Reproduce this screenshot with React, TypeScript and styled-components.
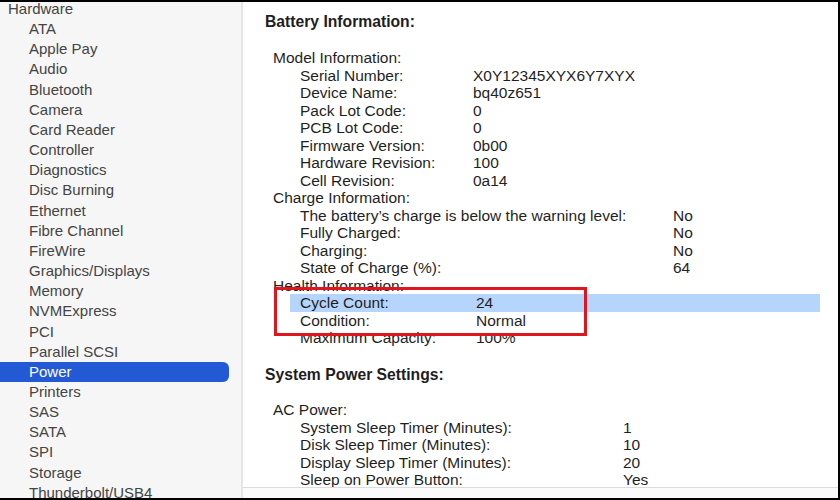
import React from "react";
import styled, { createGlobalStyle } from "styled-components";

const Global = createGlobalStyle`
  html, body { margin: 0; padding: 0; background: #fff; }
  body { font-family: "Liberation Sans", Arial, sans-serif; -webkit-font-smoothing: antialiased; }
  * { box-sizing: border-box; }
`;

const Window = styled.div`
  width: 840px;
  height: 500px;
  border-top: 2px solid #000;
  border-bottom: 2px solid #000;
  display: flex;
  overflow: hidden;
  background: #fff;
`;

const Sidebar = styled.div`
  width: 243px;
  flex-shrink: 0;
  background: #f6f6f6;
  border-right: 2px solid #e6e6e6;
  overflow: hidden;
  padding-right: 12px;
`;

const SideList = styled.div`
  margin-top: -3px;
  display: flex;
  flex-direction: column;
`;

const SideRow = styled.div<{ $level: number; $selected?: boolean }>`
  height: 20.17px;
  line-height: 20.17px;
  font-size: 15px;
  color: ${(p) => (p.$selected ? "#fff" : "#444")};
  background: ${(p) => (p.$selected ? "#2459d6" : "transparent")};
  border-radius: ${(p) => (p.$selected ? "0 6px 6px 0" : "0")};
  padding-left: ${(p) => (p.$level === 0 ? 8 : 29)}px;
  white-space: nowrap;
`;

const Main = styled.div`
  flex: 1;
  display: flex;
  flex-direction: column;
  position: relative;
  border-right: 2px solid #000;
`;

const Scroll = styled.div`
  flex: 1;
  overflow: hidden;
  padding-left: 22px;
  padding-top: 11px;
  color: #1f1f1f;
  font-size: 15.5px;
`;

const BottomStrip = styled.div`
  height: 11px;
  border-top: 1px solid #dcdcdc;
  background: #fbfbfb;
`;

const Heading = styled.div<{ $gap: number }>`
  font-weight: bold;
  font-size: 15.7px;
  line-height: 17.5px;
  color: #1e1e1e;
  margin-bottom: ${(p) => p.$gap}px;
`;

const Section = styled.div<{ $gap?: number }>`
  margin-bottom: ${(p) => p.$gap ?? 0}px;
`;

const GroupTitle = styled.div`
  padding-left: 8px;
  line-height: 17.5px;
  height: 17.5px;
  white-space: nowrap;
`;

const Row = styled.div<{ $label: number; $highlight?: boolean }>`
  display: grid;
  grid-template-columns: ${(p) => p.$label}px auto;
  padding-left: ${(p) => (p.$highlight ? 10 : 35)}px;
  margin-left: ${(p) => (p.$highlight ? 25 : 0)}px;
  margin-right: ${(p) => (p.$highlight ? 18 : 0)}px;
  height: 17.5px;
  line-height: 17.5px;
  white-space: nowrap;
  background: ${(p) => (p.$highlight ? "#b5d5fd" : "transparent")};
`;

const Label = styled.span``;
const Value = styled.span``;

const Annotation = styled.div`
  position: absolute;
  left: 31px;
  top: 285px;
  width: 313px;
  height: 49px;
  border: 3px solid #e0151d;
  pointer-events: none;
`;

const sideItems = [
  "ATA", "Apple Pay", "Audio", "Bluetooth", "Camera", "Card Reader", "Controller",
  "Diagnostics", "Disc Burning", "Ethernet", "Fibre Channel", "FireWire",
  "Graphics/Displays", "Memory", "NVMExpress", "PCI", "Parallel SCSI", "Power",
  "Printers", "SAS", "SATA", "SPI", "Storage", "Thunderbolt/USB4",
];

type Item = [string, string];

const modelInfo: Item[] = [
  ["Serial Number:", "X0Y12345XYX6Y7XYX"],
  ["Device Name:", "bq40z651"],
  ["Pack Lot Code:", "0"],
  ["PCB Lot Code:", "0"],
  ["Firmware Version:", "0b00"],
  ["Hardware Revision:", "100"],
  ["Cell Revision:", "0a14"],
];

const chargeInfo: Item[] = [
  ["The battery\u2019s charge is below the warning level:", "No"],
  ["Fully Charged:", "No"],
  ["Charging:", "No"],
  ["State of Charge (%):", "64"],
];

const healthInfo: Item[] = [
  ["Cycle Count:", "24"],
  ["Condition:", "Normal"],
  ["Maximum Capacity:", "100%"],
];

const acPower: Item[] = [
  ["System Sleep Timer (Minutes):", "1"],
  ["Disk Sleep Timer (Minutes):", "10"],
  ["Display Sleep Timer (Minutes):", "20"],
  ["Sleep on Power Button:", "Yes"],
];

function Group({ title, items, label, highlight }: { title: string; items: Item[]; label: number; highlight?: number }) {
  return (
    <>
      <GroupTitle>{title}</GroupTitle>
      {items.map(([k, v], i) => (
        <Row key={k} $label={label} $highlight={highlight === i}>
          <Label>{k}</Label>
          <Value>{v}</Value>
        </Row>
      ))}
    </>
  );
}

export default function App() {
  return (
    <>
      <Global />
      <Window>
        <Sidebar>
          <SideList>
            <SideRow $level={0}>Hardware</SideRow>
            {sideItems.map((s) => (
              <SideRow key={s} $level={1} $selected={s === "Power"}>
                {s}
              </SideRow>
            ))}
          </SideList>
        </Sidebar>
        <Main>
          <Scroll>
            <Heading $gap={18.75}>Battery Information:</Heading>
            <Section $gap={19.5}>
              <Group title="Model Information:" items={modelInfo} label={173} />
              <Group title="Charge Information:" items={chargeInfo} label={373} />
              <Group title="Health Information:" items={healthInfo} label={176} highlight={0} />
            </Section>
            <Heading $gap={17.5}>System Power Settings:</Heading>
            <Section>
              <Group title="AC Power:" items={acPower} label={323} />
            </Section>
          </Scroll>
          <BottomStrip />
          <Annotation />
        </Main>
      </Window>
    </>
  );
}
